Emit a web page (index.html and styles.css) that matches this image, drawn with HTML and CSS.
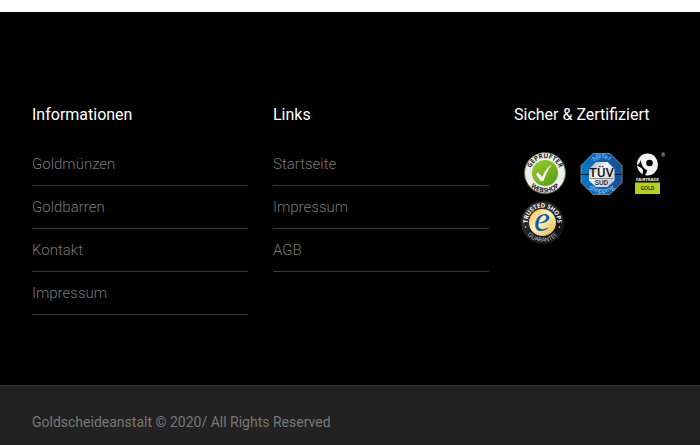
FILE: index.html
```html
<!DOCTYPE html>
<html lang="de">
<head>
<meta charset="utf-8">
<meta name="viewport" content="width=device-width, initial-scale=1">
<title>Goldscheideanstalt</title>
<link rel="stylesheet" href="styles.css">
</head>
<body>
<footer class="footer">
  <div class="footer-columns">
    <nav class="column" aria-labelledby="info-title">
      <h2 class="column-title" id="info-title">Informationen</h2>
      <ul class="link-list">
        <li><a href="#">Goldmünzen</a></li>
        <li><a href="#">Goldbarren</a></li>
        <li><a href="#">Kontakt</a></li>
        <li><a href="#">Impressum</a></li>
      </ul>
    </nav>
    <nav class="column" aria-labelledby="links-title">
      <h2 class="column-title" id="links-title">Links</h2>
      <ul class="link-list">
        <li><a href="#">Startseite</a></li>
        <li><a href="#">Impressum</a></li>
        <li><a href="#">AGB</a></li>
      </ul>
    </nav>
    <section class="column">
      <h2 class="column-title">Sicher &amp; Zertifiziert</h2>
      <div class="badges">
        <svg class="badge" width="60" height="50" viewBox="0 0 60 50">
          <defs>
            <linearGradient id="green" x1="0" y1="0" x2="1" y2="1"><stop offset="0" stop-color="#9bd02f"/><stop offset="1" stop-color="#559a12"/></linearGradient>
            <path id="g-top" d="M16 24a15 15 0 0 1 30 0"/>
            <path id="g-bottom" d="M11.500 24a19.500 19.500 0 0 0 39 0"/>
          </defs>
          <circle cx="31" cy="24" r="20.500" fill="#eeeeec" stroke="#56733a" stroke-width="1"/>
          <circle cx="31" cy="24" r="13" fill="url(#green)"/>
          <path d="M22 25l2.500-1.500 3.500 5c2-5 5-10 10-13.500-4 5-6.500 11-8.500 17h-3z" fill="#fff"/>
          <g class="seal-text" fill="#252525">
            <text font-size="6.500"><textPath href="#g-top" startOffset="50%" text-anchor="middle">GEPRÜFTER</textPath></text>
            <text font-size="6.500"><textPath href="#g-bottom" startOffset="50%" text-anchor="middle">WEBSHOP</textPath></text>
          </g>
        </svg>
        <svg class="badge" width="56" height="50" viewBox="0 0 56 50">
          <defs>
            <linearGradient id="blue" x1="0" y1="0" x2="1" y2="0"><stop offset="0" stop-color="#0879c4"/><stop offset=".5" stop-color="#1262ac"/><stop offset="1" stop-color="#174c91"/></linearGradient>
            <linearGradient id="silver" x1="0" y1="0" x2="1" y2="1"><stop offset="0" stop-color="#9da3aa"/><stop offset=".4" stop-color="#f7f7f7"/><stop offset="1" stop-color="#bcc0c5"/></linearGradient>
            <path id="t-top" d="M12.500 24.500a15 15 0 0 1 30 0"/>
            <path id="t-bottom" d="M8 24.500a19.500 19.500 0 0 0 39 0"/>
          </defs>
          <path d="M19 4.500h17L48 16.500v17L36 45.500H19L7 33.500v-17z" fill="url(#blue)" stroke="#8e9eac" stroke-width=".8"/>
          <path d="M7 25.500h41" stroke="#101820" stroke-width="1.200"/>
          <path d="M22 13h11.500l7 7v11.500L33.500 38H22L15 31.500V20z" fill="url(#silver)"/>
          <g class="seal-text tuv-text" fill="#18191b" text-anchor="middle">
            <text x="27.500" y="28" font-size="13">TÜV</text>
            <text x="27.500" y="36" font-size="7">SÜD</text>
          </g>
          <path d="M16 29.500h23" stroke="#56595d" stroke-width=".7"/>
          <g class="seal-text seal-text-light" font-size="6.500" fill="#9ed6ff">
            <text><textPath href="#t-top" startOffset="50%" text-anchor="middle">s@fer</textPath></text>
            <text><textPath href="#t-bottom" startOffset="50%" text-anchor="middle">shopping</textPath></text>
          </g>
        </svg>
        <svg class="badge" width="38" height="50" viewBox="0 0 38 50">
          <path d="M5 3h25v42H5z" fill="#050505"/>
          <ellipse cx="17.500" cy="15.500" rx="10.500" ry="11" fill="#f5f5f5"/>
          <circle cx="19.500" cy="14" r="3.300" fill="#050505"/>
          <path d="M6 16.500c3-.5 4-3 4.500-5.500 1.500 6 3 8.500 6.500 10 0 2-1 4-3 6.500l-2-2c2-3 1-5.500-1.500-7-1.500-1-3-1.500-4.500-2z" fill="#050505"/>
          <path d="M5 33.500h25V45H5z" fill="#b5ce23"/>
          <g class="seal-text" text-anchor="middle">
            <text x="17.500" y="31.500" font-size="4.200" fill="#f2f2f2">FAIRTRADE</text>
            <text x="17.500" y="41" font-size="5" fill="#303a08">GOLD</text>
            <text x="33" y="8" font-size="5" fill="#bbb">®</text>
          </g>
        </svg>
        <svg class="badge" width="60" height="50" viewBox="0 0 60 50">
          <defs>
            <linearGradient id="gold" x1="0" y1="0" x2="1" y2="1"><stop offset="0" stop-color="#f0bd3b"/><stop offset=".45" stop-color="#fff2bd"/><stop offset="1" stop-color="#d9b23b"/></linearGradient>
            <linearGradient id="ring" x1="0" y1="0" x2="1" y2="1"><stop offset="0" stop-color="#4a4a4a"/><stop offset=".5" stop-color="#1b1b1b"/><stop offset="1" stop-color="#080808"/></linearGradient>
            <path id="s-top" d="M13.500 23.500a15 15 0 0 1 30 0"/>
            <path id="s-bottom" d="M9 23.500a19.500 19.500 0 0 0 39 0"/>
          </defs>
          <circle cx="28.500" cy="23.500" r="21" fill="url(#ring)" stroke="#242424" stroke-width="1"/>
          <circle cx="28.500" cy="23.500" r="13.500" fill="url(#gold)"/>
          <text class="trusted-e" x="28" y="31.500" text-anchor="middle" fill="#135da8">e</text>
          <circle cx="11.500" cy="28" r=".8" fill="#ddd"/><circle cx="45.500" cy="28" r=".8" fill="#ddd"/>
          <g class="seal-text" font-size="6" fill="#fafafa">
            <text><textPath href="#s-top" startOffset="50%" text-anchor="middle">TRUSTED SHOPS</textPath></text>
            <text class="seal-text-light" fill="#ccc"><textPath href="#s-bottom" startOffset="50%" text-anchor="middle">GUARANTEE</textPath></text>
          </g>
        </svg>
      </div>
    </section>
  </div>
  <div class="footer-bottom">
    <p class="copyright">Goldscheideanstalt © 2020/ All Rights Reserved</p>
  </div>
</footer>
</body>
</html>
```
FILE: styles.css
```css
body {
  margin: 0;
  padding-top: 12px;
  background: #fff;
  font-family: Roboto, sans-serif;
  font-size: 16px;
  line-height: 24px;
}

.footer {
  background: #000;
}

.footer-columns {
  display: grid;
  grid-template-columns: 216fr 216fr 154fr;
  column-gap: 25px;
  padding: 91px 32px 70px;
}

.column {
  min-width: 0;
}

.column-title {
  margin: 0 0 16px;
  color: #fff;
  font-size: 16px;
  font-weight: 400;
  white-space: nowrap;
}

.link-list {
  margin: 0;
  padding: 0;
  font-size: 15px;
  list-style: none;
}

.link-list li {
  padding: 9px 0;
  border-bottom: 1px solid #383838;
}

.link-list a {
  color: #777;
  font-weight: 300;
  text-decoration: none;
}

.badges {
  display: flex;
  flex-wrap: wrap;
  padding-top: 6px;
}

.badge {
  display: block;
  flex: none;
}

.seal-text {
  font-family: "Open Sans", sans-serif;
  font-weight: 700;
}

.seal-text-light {
  font-weight: 400;
}

.tuv-text {
  font-family: Roboto, sans-serif;
  font-weight: 500;
}

.trusted-e {
  font-family: "Liberation Serif", serif;
  font-size: 36px;
  font-style: italic;
  font-weight: 400;
}

.footer-bottom {
  padding: 24px 32px;
  border-top: 1px solid #383838;
  background: #222;
}

.copyright {
  margin: 0;
  color: #777;
  font-size: 14px;
}
```
